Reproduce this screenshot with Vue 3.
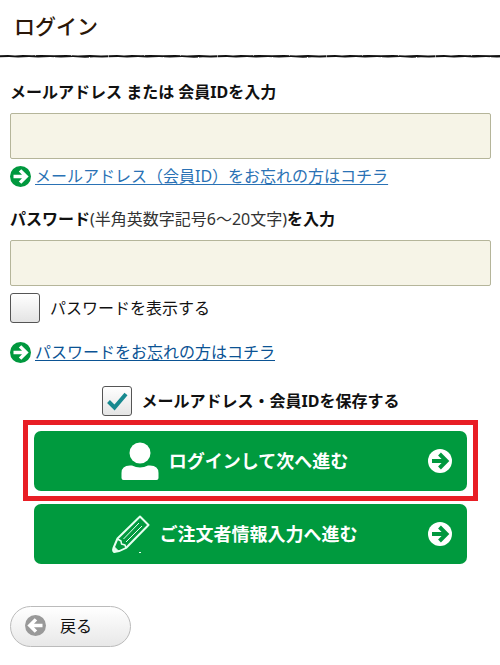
<template>
  <main class="login-page">
    <h1 class="page-title">ログイン</h1>
    <svg class="rough-line" height="5" aria-hidden="true">
      <defs>
        <pattern id="rough" width="109" height="5" patternUnits="userSpaceOnUse">
          <path
            d="M0 1.2 L8 1 L15 1.4 L23 1 L32 1.3 L41 1 L54 1.3 L66 1 L78 1.4 L90 1 L101 1.4 L108.500 1.2 V3.2 L102 3.6 L94 3.2 L85 3.7 L73 3.1 L61 3.5 L50 3.1 L38 3.6 L29 3.1 L18 3.5 L9 3.1 L0 3.3 Z"
            fill="#111"
          />
          <path d="M35 1 h1 v0.5 h-1 z M54 3 h1 v1 h-1 z M71 1 h1 v0.5 h-1 z M89 3 h1 v1 h-1 z" fill="#fff" />
        </pattern>
      </defs>
      <rect width="100%" height="5" fill="url(#rough)" />
    </svg>

    <form class="login-form" @submit.prevent>
      <label class="field-label" for="member-id">メールアドレス または 会員IDを入力</label>
      <input id="member-id" v-model="memberId" class="text-field" type="text" />
      <p class="help-row">
        <svg class="icon-arrow" viewBox="0 0 24 24" aria-hidden="true">
          <circle cx="12" cy="12" r="12" fill="#00983e" />
          <path :d="arrowPath" class="arrow-stroke white" />
        </svg>
        <a href="#">メールアドレス（会員ID）をお忘れの方はコチラ</a>
      </p>

      <label class="field-label second" for="password">パスワード<span>(半角英数字記号6～20文字)</span>を入力</label>
      <input id="password" v-model="password" class="text-field" :type="showPassword ? 'text' : 'password'" />
      <div class="check-row">
        <input id="show-password" v-model="showPassword" type="checkbox" />
        <label for="show-password">パスワードを表示する</label>
      </div>
      <p class="help-row last">
        <svg class="icon-arrow" viewBox="0 0 24 24" aria-hidden="true">
          <circle cx="12" cy="12" r="12" fill="#00983e" />
          <path :d="arrowPath" class="arrow-stroke white" />
        </svg>
        <a class="dark" href="#">パスワードをお忘れの方はコチラ</a>
      </p>

      <div class="check-row save">
        <span class="check-box">
          <input id="save-id" v-model="saveId" type="checkbox" />
          <svg v-if="saveId" class="check-mark" viewBox="0 0 30 30" aria-hidden="true">
            <path d="M6.500 15.500 L12.500 21.500 L24 8" fill="none" stroke="#17898f" stroke-width="4" />
          </svg>
        </span>
        <label for="save-id">メールアドレス・会員IDを保存する</label>
      </div>

      <div class="highlight">
        <button class="main-button" type="submit">
          <span class="button-body">
            <svg class="button-icon" viewBox="0 0 38 38" aria-hidden="true">
              <circle cx="19" cy="11" r="10.5" fill="#fff" />
              <path d="M0.5 36 V31 Q0.5 23.5 9 23.5 H11 Q19 27.5 27 23.5 H29 Q37.500 23.5 37.500 31 V36 Q37.500 38 35.500 38 H2.500 Q0.500 38 0.500 36 Z" fill="#fff" />
            </svg>
            <span>ログインして次へ進む</span>
          </span>
          <svg class="button-arrow" viewBox="0 0 24 24" aria-hidden="true">
            <circle cx="12" cy="12" r="12" fill="#fff" />
            <path :d="arrowPath" class="arrow-stroke green" />
          </svg>
        </button>
      </div>
      <div class="order">
        <button class="main-button" type="button">
          <span class="button-body">
            <svg class="button-icon" viewBox="0 0 38 38" aria-hidden="true">
              <g fill="none" stroke="#e6fff0" stroke-linejoin="round">
                <path d="M28 1.500 L36.500 10 L14 33 Q8 36.500 2 37 Q0.500 36 1.500 33 L5.500 23.500 Z" stroke-width="2" />
                <path d="M5.500 24 L9 26 L9.500 29 L13 30 L14 33" stroke-width="1.500" />
                <path d="M11.500 24 L27 8 M14 27 L30 11" stroke-width="1" />
                <path d="M2 37 L2.500 32 L6.500 36 Z" fill="#e6fff0" />
                <path d="M27 37.500 h2" stroke-width="1" />
              </g>
            </svg>
            <span>ご注文者情報入力へ進む</span>
          </span>
          <svg class="button-arrow" viewBox="0 0 24 24" aria-hidden="true">
            <circle cx="12" cy="12" r="12" fill="#fff" />
            <path :d="arrowPath" class="arrow-stroke green" />
          </svg>
        </button>
      </div>

      <button class="back-button" type="button">
        <svg class="icon-arrow" viewBox="0 0 24 24" aria-hidden="true">
          <circle cx="12" cy="12" r="12" fill="#999" />
          <path d="M20 12 H6 M12.500 5 L5.500 12 L12.500 19" class="arrow-stroke white" />
        </svg>
        <span>戻る</span>
      </button>
    </form>
  </main>
</template>

<script setup>
import { ref } from 'vue'

const memberId = ref('')
const password = ref('')
const showPassword = ref(false)
const saveId = ref(true)

const arrowPath = 'M4 12 H18 M11.500 5 L18.500 12 L11.500 19'
</script>

<style>
body {
  background: #fff;
}
</style>

<style scoped>
.login-page {
  color: #111;
  font-family: "Noto Sans", "Noto Sans CJK JP", sans-serif;
  font-size: 16px;
  line-height: 24px;
}

.page-title {
  margin: 0;
  padding: 10px 14px 12px;
  color: #2b1708;
  font-size: 21px;
  font-weight: 500;
  line-height: 32px;
}

.rough-line {
  display: block;
  width: 100%;
}

.login-form {
  padding: 21px 9px 18px 10px;
}

.field-label {
  display: block;
  margin-bottom: 9px;
  font-weight: 700;
}

.field-label span {
  color: #333;
  font-weight: 400;
}

.field-label.second {
  margin-top: 19px;
}

.text-field {
  display: block;
  box-sizing: border-box;
  width: 100%;
  height: 46px;
  padding: 0 12px;
  border: 1px solid #b5b59a;
  border-radius: 2px;
  background: #f6f4e7;
  font: inherit;
}

.help-row {
  display: flex;
  align-items: center;
  gap: 4px;
  margin: 5px 0 0;
}

.help-row.last {
  margin-top: 17px;
}

.help-row a {
  color: #2a72b5;
  text-underline-offset: 2px;
}

.help-row a.dark {
  color: #0b5394;
}

.icon-arrow {
  flex: none;
  width: 21px;
  height: 21px;
}

.arrow-stroke {
  fill: none;
  stroke-width: 4;
}

.white {
  stroke: #fff;
}

.green {
  stroke: #00983e;
}

.check-row {
  display: flex;
  align-items: center;
  gap: 10px;
  margin-top: 7px;
}

.check-row.save {
  justify-content: center;
  margin-top: 22px;
  font-weight: 700;
}

.check-box {
  display: flex;
  position: relative;
}

.check-row input {
  appearance: none;
  flex: none;
  width: 30px;
  height: 30px;
  margin: 0;
  border: 1px solid #555;
  border-radius: 3px;
  background: linear-gradient(#fff, #e4e4e4);
}

.check-mark {
  position: absolute;
  inset: 0;
  pointer-events: none;
}

.highlight {
  margin: 4px 13px 3px;
  padding: 6px 6px 5px;
  border: 5px solid #e81e25;
}

.order {
  padding: 0 24px;
}

.main-button {
  display: flex;
  align-items: center;
  width: 100%;
  height: 60px;
  padding: 0 15px 0 7px;
  border: 0;
  border-radius: 7px;
  background: #009a3e;
  color: #fff;
  font: inherit;
  font-size: 18px;
  font-weight: 700;
}

.button-body {
  display: flex;
  flex: 1;
  align-items: center;
  justify-content: center;
  gap: 10px;
}

.button-icon {
  width: 38px;
  height: 38px;
}

.button-arrow {
  flex: none;
  width: 24px;
  height: 24px;
}

.back-button {
  display: flex;
  align-items: center;
  gap: 14px;
  height: 41px;
  margin-top: 42px;
  padding: 0 38px 2px 14px;
  border: 1px solid #bbb;
  border-radius: 21px;
  background: linear-gradient(#fff, #e8e8e8);
  color: #111;
  font: inherit;
}
</style>
